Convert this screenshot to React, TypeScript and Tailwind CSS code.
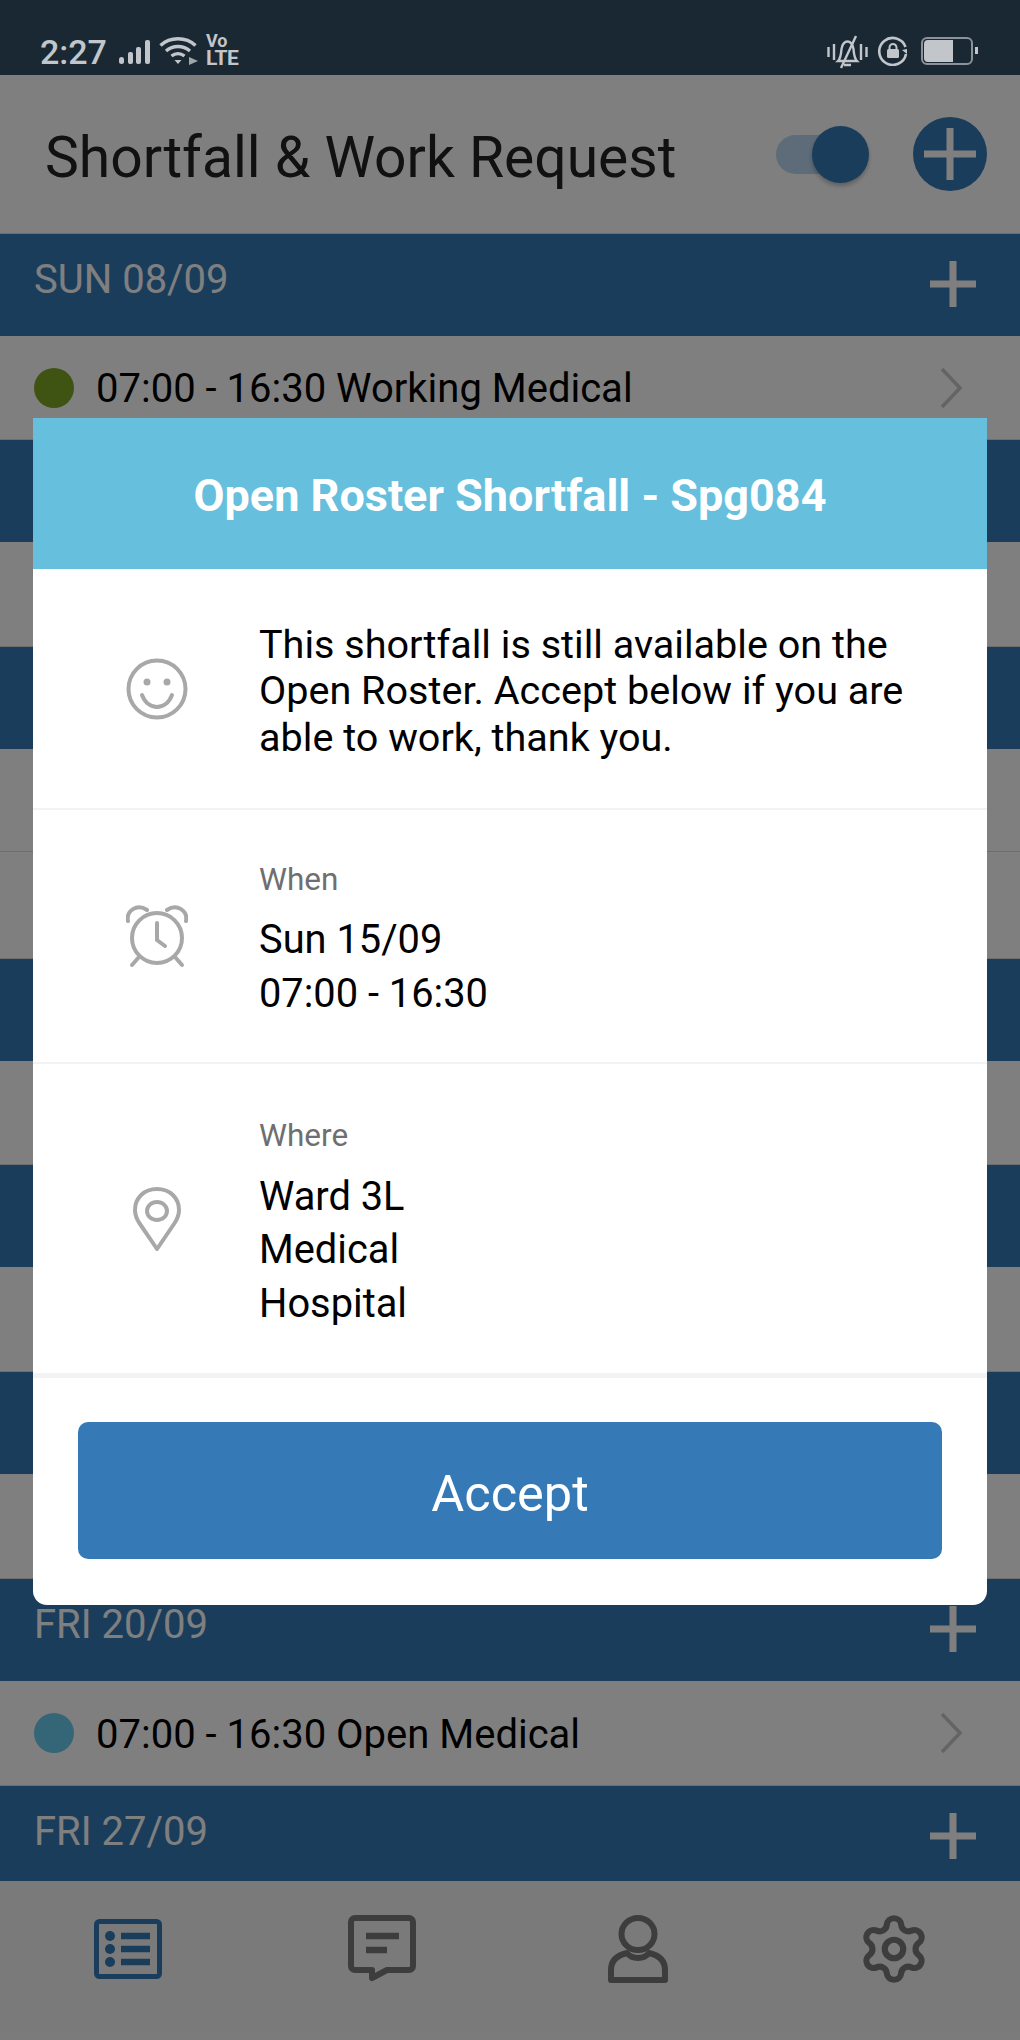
import { Settings } from "lucide-react";

const font = { fontFamily: "Roboto, 'Liberation Sans', sans-serif" };

interface Section {
  date?: string;
  bandClass?: string;
  rows: { rowClass: string; text?: string; dotClass?: string }[];
}

const sections: Section[] = [
  { date: "SUN 08/09", rows: [{ rowClass: "h-[104px]", text: "07:00 - 16:30 Working Medical", dotClass: "bg-[#7ea826]" }] },
  { rows: [{ rowClass: "h-[105px]" }] },
  { rows: [{ rowClass: "h-[103px]" }, { rowClass: "h-[107px]" }] },
  { rows: [{ rowClass: "h-[104px]" }] },
  { rows: [{ rowClass: "h-[105px]" }] },
  { rows: [{ rowClass: "h-[105px]" }] },
  { date: "FRI 20/09", rows: [{ rowClass: "h-[105px]", text: "07:00 - 16:30 Open Medical", dotClass: "bg-[#6accee]" }] },
  { date: "FRI 27/09", bandClass: "h-[95px]", rows: [] },
];

function PlusMark() {
  return (
    <svg width="46" height="46" viewBox="0 0 46 46" className="mt-[27px] shrink-0">
      <path d="M23 0v46M0 23h46" stroke="#ffffff" strokeWidth="7" />
    </svg>
  );
}

function StatusBar() {
  return (
    <div className="h-[75px] bg-[#1a2834] flex items-start text-[#c2c6ca] relative">
      <span className="absolute left-[40px] top-[34px] text-[34px] leading-[36px] font-medium">2:27</span>
      <svg className="absolute left-[119px] top-[40px]" width="31" height="25" viewBox="0 0 31 25" fill="currentColor">
        <rect x="0" y="17" width="5" height="7" rx="2.5" />
        <rect x="9" y="12" width="5" height="12" rx="2" />
        <rect x="17" y="7" width="5" height="17" rx="2" />
        <rect x="26" y="0" width="5" height="24" rx="2" />
      </svg>
      <svg className="absolute left-[159px] top-[37px]" width="40" height="28" viewBox="0 0 40 28" fill="none" stroke="currentColor" strokeWidth="3.4">
        <path d="M1.5 8.5C11 -.5 27 -.5 36.5 8.5" />
        <path d="M7 14c7-6 17-6 24 0" />
        <path d="M12.5 19c4-3.2 9-3.2 13 0" />
        <path d="M15.5 23l3.5 4 3.5-4z" fill="currentColor" stroke="none" />
        <path d="M30 20l9 4-9 4z" fill="currentColor" stroke="none" opacity="0.8" />
      </svg>
      <div className="absolute left-[206px] top-[32px] flex flex-col font-bold">
        <span className="text-[18px] leading-[17px]">Vo</span>
        <span className="text-[21px] leading-[19px] tracking-[-0.5px]">LTE</span>
      </div>
      <svg className="absolute left-[827px] top-[35px]" width="41" height="34" viewBox="0 0 41 34" fill="none" stroke="currentColor" strokeWidth="2.4">
        <path d="M1.5 12v10M7 9v16M34 9v16M39.500 12v10" />
        <path d="M11 26c3-3 3-7 3.500-12C15 9 18 6.500 20.500 6.500S26 9 26.500 14c.5 5 .5 9 3.500 12z" />
        <path d="M17 30h7M29 1L14 33" />
      </svg>
      <svg className="absolute left-[878px] top-[36px]" width="30" height="30" viewBox="0 0 30 30" fill="none" stroke="currentColor" strokeWidth="2.600">
        <path d="M27.500 11A13.500 13.500 0 1 0 28 18" />
        <path d="M24 14l5-1 0 5z" fill="currentColor" stroke="none" />
        <rect x="9" y="13" width="12" height="9" rx="1.500" fill="currentColor" stroke="none" />
        <path d="M11.500 14v-2.500a3.500 3.500 0 0 1 7 0V14" strokeWidth="2" />
      </svg>
      <div className="absolute left-[921px] top-[37px] w-[52px] h-[28px] rounded-[6px] border-2 border-[#8b9299] p-[1px] flex">
        <div className="w-[29px] bg-[#c2c6ca] rounded-l-[4px]" />
      </div>
      <div className="absolute left-[975px] top-[47px] w-[3px] h-[7px] bg-[#c2c6ca]" />
    </div>
  );
}

function TopBar() {
  return (
    <div className="h-[159px] bg-white flex items-center relative border-b border-[#dddddd]">
      <h1 className="ml-[45px] pt-[8px] text-[57px] leading-[60px] text-[#222222] font-normal">Shortfall &amp; Work Request</h1>
      <div className="ml-auto mr-[152px] w-[92px] h-[39px] rounded-full bg-[#bcd8f2]" />
      <div className="absolute left-[812px] top-[51px] w-[57px] h-[57px] rounded-full bg-[#357ab7] shadow-[0_3px_4px_rgba(0,0,0,0.25)]" />
      <div className="absolute left-[913px] top-[42px] w-[74px] h-[74px] rounded-full bg-[#357ab7] flex items-center justify-center">
        <svg width="52" height="52" viewBox="0 0 52 52">
          <path d="M26 0v52M0 26h52" stroke="#ffffff" strokeWidth="7" />
        </svg>
      </div>
    </div>
  );
}

function BottomNav() {
  return (
    <div className="h-[159px] bg-[#f5f5f5] relative flex items-start">
      <svg className="ml-[94px] mt-[38px]" width="68" height="60" viewBox="0 0 68 60">
        <rect x="2.500" y="2.500" width="63" height="55" rx="3" fill="none" stroke="#357ab7" strokeWidth="5" />
        <circle cx="16" cy="17" r="5" fill="#357ab7" />
        <circle cx="16" cy="30" r="5" fill="#357ab7" />
        <circle cx="16" cy="43" r="5" fill="#357ab7" />
        <path d="M27 17h29M27 30h29M27 43h29" stroke="#357ab7" strokeWidth="6.500" />
      </svg>
      <svg className="ml-[186px] mt-[34px]" width="68" height="68" viewBox="0 0 68 68" fill="none" stroke="#7a7a7a" strokeWidth="6">
        <path d="M7 3h54a4 4 0 0 1 4 4v44a4 4 0 0 1-4 4H39L24 63v-8H7a4 4 0 0 1-4-4V7a4 4 0 0 1 4-4z" strokeLinejoin="round" />
        <path d="M18 21h33M18 35h21" strokeWidth="6.500" />
      </svg>
      <svg className="ml-[192px] mt-[34px]" width="60" height="68" viewBox="0 0 60 68" fill="none" stroke="#7a7a7a" strokeWidth="6">
        <ellipse cx="30" cy="19" rx="16.500" ry="16" />
        <path d="M19 38c-9 2-16 7-16 17v10h54V55c0-10-7-15-16-17-3 4-7 5-11 5s-8-1-11-5z" strokeLinejoin="round" />
      </svg>
      <div className="ml-[189px] mt-[31px] text-[#7a7a7a]">
        <Settings size={74} strokeWidth={2} />
      </div>
    </div>
  );
}

function SmileIcon() {
  return (
    <svg width="62" height="62" viewBox="0 0 62 62" fill="none" stroke="#a8a8a8" strokeWidth="4">
      <circle cx="31" cy="31" r="28.500" />
      <circle cx="21" cy="24" r="3.500" fill="#a8a8a8" stroke="none" />
      <circle cx="41" cy="24" r="3.500" fill="#a8a8a8" stroke="none" />
      <path d="M16 37c3 8 9 12 15 12s12-4 15-12" strokeLinecap="round" />
    </svg>
  );
}

function AlarmIcon() {
  return (
    <svg width="62" height="64" viewBox="0 0 62 64" fill="none" stroke="#a8a8a8" strokeWidth="4" strokeLinecap="round">
      <circle cx="31" cy="34" r="25" />
      <path d="M31 19v17l8 6" />
      <path d="M2 17C0 7 11 -1 21 6" />
      <path d="M60 17C62 7 51 -1 41 6" />
      <path d="M13 53l-7 8M49 53l7 8" />
    </svg>
  );
}

function PinIcon() {
  return (
    <svg width="48" height="64" viewBox="0 0 48 64" fill="none" stroke="#a8a8a8" strokeWidth="4" strokeLinejoin="round">
      <path d="M24 2C11 2 2 11 2 23c0 5 1.500 9 5 14l17 25 17-25c3.500-5 5-9 5-14C46 11 37 2 24 2z" />
      <ellipse cx="24" cy="24" rx="10" ry="9" />
    </svg>
  );
}

function Modal() {
  return (
    <div className="bg-white rounded-b-[14px] overflow-hidden">
      <div className="h-[151px] bg-[#65bfdd] flex items-center justify-center">
        <h2 className="pt-[4px] text-[45px] font-bold text-white leading-[48px]">Open Roster Shortfall - Spg084</h2>
      </div>
      <div className="h-[241px] flex items-center border-b-2 border-[#f3f3f3]">
        <div className="ml-[93px] w-[133px] shrink-0">
          <SmileIcon />
        </div>
        <p className="pt-[6px] text-[39.600px] leading-[46.500px] text-black">
          This shortfall is still available on the
          <br />
          Open Roster. Accept below if you are
          <br />
          able to work, thank you.
        </p>
      </div>
      <div className="h-[254px] flex items-center border-b-2 border-[#f3f3f3]">
        <div className="ml-[93px] w-[133px] shrink-0">
          <AlarmIcon />
        </div>
        <div className="pt-[9px]">
          <div className="text-[31.500px] leading-[40px] text-[#6f6f6f]">When</div>
          <div className="mt-[13px] text-[39.800px] leading-[54px] text-black">
            Sun 15/09
            <br />
            07:00 - 16:30
          </div>
        </div>
      </div>
      <div className="h-[314px] flex items-center border-b-[5px] border-[#f3f3f3]">
        <div className="ml-[100px] w-[126px] shrink-0">
          <PinIcon />
        </div>
        <div className="pt-[9px]">
          <div className="text-[31.500px] leading-[40px] text-[#6f6f6f]">Where</div>
          <div className="mt-[14px] text-[39.800px] leading-[53.500px] text-black">
            Ward 3L
            <br />
            Medical
            <br />
            Hospital
          </div>
        </div>
      </div>
      <div className="px-[45px] pt-[44px] pb-[46px]">
        <button type="button" className="w-full h-[137px] pt-[6px] rounded-[10px] bg-[#357ab7] text-white text-[50.500px]">
          Accept
        </button>
      </div>
    </div>
  );
}

export default function App() {
  return (
    <div className="relative w-[1020px] h-[2040px] overflow-hidden bg-white" style={font}>
      <StatusBar />
      <TopBar />
      {sections.map((section, i) => (
        <div key={i}>
          <div className={`${section.bandClass ?? "h-[102px]"} bg-[#357ab7] flex justify-between pl-[34px] pr-[44px]`}>
            <span className="mt-[21px] text-[40px] leading-[50px] text-white">{section.date}</span>
            <PlusMark />
          </div>
          {section.rows.map((row, j) => (
            <div key={j} className={`${row.rowClass} bg-white flex items-center pl-[34px] pr-[58px] border-b border-[#dddddd]`}>
              {row.text && (
                <>
                  <span className={`w-[40px] h-[40px] rounded-full ${row.dotClass}`} />
                  <span className="ml-[22px] mt-[3px] text-[40px] leading-[46px] text-black">{row.text}</span>
                  <svg className="ml-auto" width="22" height="40" viewBox="0 0 22 40" fill="none" stroke="#c8c8c8" strokeWidth="3.500">
                    <path d="M2 1l18 19L2 39" />
                  </svg>
                </>
              )}
            </div>
          ))}
        </div>
      ))}
      <BottomNav />
      <div className="absolute inset-x-0 top-[75px] bottom-0 bg-black/50 px-[33px] pt-[343px]">
        <Modal />
      </div>
    </div>
  );
}
